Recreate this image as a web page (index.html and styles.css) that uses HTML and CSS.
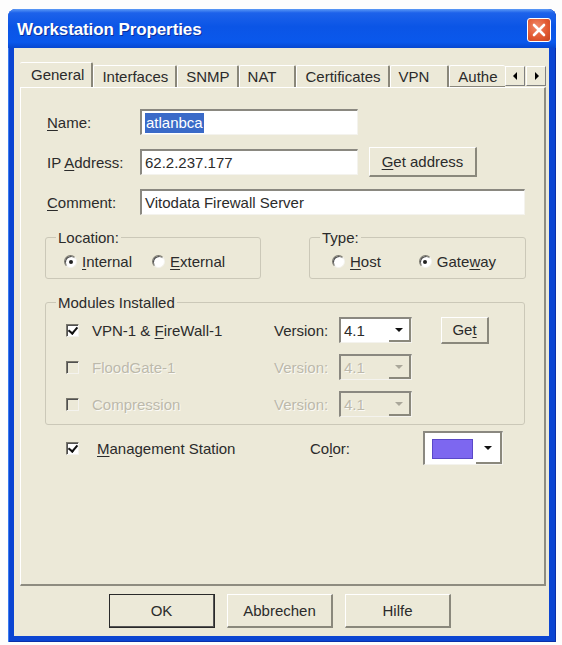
FILE: index.html
```html
<!DOCTYPE html>
<html lang="en">
<head>
<meta charset="utf-8">
<title>Workstation Properties</title>
<link rel="stylesheet" href="styles.css">
</head>
<body>
<div class="window">
  <div class="titlebar">
    <span class="title">Workstation Properties</span>
    <span class="close-btn" aria-label="Close">
      <svg width="14" height="14" viewBox="0 0 14 14"><path d="M2 2 L12 12 M12 2 L2 12" stroke="#fff" stroke-width="2.6" stroke-linecap="round"/></svg>
    </span>
  </div>

  <div class="client">
    <div class="tabstrip">
      <div class="tabs">
        <span class="tab active">General</span>
        <span class="tab">Interfaces</span>
        <span class="tab">SNMP</span>
        <span class="tab wide">NAT</span>
        <span class="tab">Certificates</span>
        <span class="tab wide">VPN</span>
        <span class="tab tab-clipped">Authe</span>
      </div>
      <div class="tab-scroll">
        <span class="scroll-btn"><svg width="5" height="8" viewBox="0 0 5 8"><path d="M4 0 L0 4 L4 8 Z" fill="#000"/></svg></span>
        <span class="scroll-btn"><svg width="5" height="8" viewBox="0 0 5 8"><path d="M1 0 L5 4 L1 8 Z" fill="#000"/></svg></span>
      </div>
    </div>

    <div class="panel">
      <div class="fields">
        <div class="field-row">
          <label class="field-label"><u>N</u>ame:</label>
          <div class="textbox"><span class="selected">atlanbca</span></div>
        </div>
        <div class="field-row">
          <label class="field-label">IP <u>A</u>ddress:</label>
          <div class="textbox">62.2.237.177</div>
          <span class="button btn-getaddr"><u>G</u>et address</span>
        </div>
        <div class="field-row">
          <label class="field-label"><u>C</u>omment:</label>
          <div class="textbox textbox-wide">Vitodata Firewall Server</div>
        </div>
      </div>

      <div class="group-row">
        <fieldset class="group group-location">
          <legend>Location:</legend>
          <div class="radio-row">
            <span class="radio checked"><span class="radio-dot"></span><span><u>I</u>nternal</span></span>
            <span class="radio"><span class="radio-dot"></span><span><u>E</u>xternal</span></span>
          </div>
        </fieldset>
        <fieldset class="group group-type">
          <legend>Type:</legend>
          <div class="radio-row">
            <span class="radio"><span class="radio-dot"></span><span><u>H</u>ost</span></span>
            <span class="radio checked gap-wide"><span class="radio-dot"></span><span>Gate<u>w</u>ay</span></span>
          </div>
        </fieldset>
      </div>

      <fieldset class="group group-modules">
        <legend>Modules Installed</legend>
        <div class="module-row">
          <span class="checkbox checked"></span>
          <span class="module-name">VPN-1 &amp; <u>F</u>ireWall-1</span>
          <span class="version-label">Version:</span>
          <span class="combo"><span class="combo-value">4.1</span><span class="combo-btn"></span></span>
          <span class="button btn-get">Ge<u>t</u></span>
        </div>
        <div class="module-row disabled">
          <span class="checkbox"></span>
          <span class="module-name">FloodGate-1</span>
          <span class="version-label">Version:</span>
          <span class="combo"><span class="combo-value">4.1</span><span class="combo-btn"></span></span>
        </div>
        <div class="module-row disabled">
          <span class="checkbox"></span>
          <span class="module-name">Compression</span>
          <span class="version-label">Version:</span>
          <span class="combo"><span class="combo-value">4.1</span><span class="combo-btn"></span></span>
        </div>
      </fieldset>

      <div class="mgmt-row">
        <span class="checkbox checked"></span>
        <span class="mgmt-name"><u>M</u>anagement Station</span>
        <span class="color-label">Co<u>l</u>or:</span>
        <span class="combo combo-color"><span class="combo-value"><span class="swatch"></span></span><span class="combo-btn"></span></span>
      </div>
    </div>

    <div class="dialog-buttons">
      <span class="button dlg-btn default">OK</span>
      <span class="button dlg-btn">Abbrechen</span>
      <span class="button dlg-btn">Hilfe</span>
    </div>
  </div>
</div>
</body>
</html>
```

FILE: styles.css
```css
* { box-sizing: border-box; }

body {
  margin: 0;
  background: #fdfdfd;
  font-family: "Liberation Sans", Arial, sans-serif;
  font-size: 15px;
  color: #2b2b2b;
}

u { text-decoration-thickness: 1px; text-underline-offset: 2px; }

/* window frame */
.window {
  margin: 9px 0 0 8px;
  width: 548px;
  height: 633px;
  background: #0b45d2;
  border-radius: 8px 8px 0 0;
  display: flex;
  flex-direction: column;
  box-shadow: inset 1px 0 0 #3a7bf0, inset -1px 0 0 #0a2fa8, inset 0 -1px 0 #0a2fa8;
}

.titlebar {
  height: 39px;
  flex: none;
  display: flex;
  align-items: center;
  justify-content: space-between;
  padding: 0 5px 0 9px;
  border-radius: 8px 8px 0 0;
  background: linear-gradient(#5c9af6 0%, #1d62ea 10%, #0b55e6 45%, #0a58ec 85%, #0747d0 100%);
}

.title {
  color: #fff;
  font-weight: bold;
  font-size: 17px;
  letter-spacing: -0.1px;
  text-shadow: 1px 1px 0 #0a2f9c;
  margin-top: 2px;
}

.close-btn {
  width: 24px;
  height: 24px;
  margin-top: 2px;
  border-radius: 3px;
  border: 1px solid #fff;
  background: radial-gradient(circle at 40% 35%, #f08a6a 0%, #e25a32 55%, #c5431f 100%);
  display: flex;
  align-items: center;
  justify-content: center;
}

.client {
  flex: 1;
  margin: 0 7px 6px 6px;
  background: #ece9d8;
  padding: 14px 3px 0 6px;
  display: flex;
  flex-direction: column;
}

/* tabs */
.tabstrip {
  height: 25px;
  display: flex;
  align-items: flex-end;
}

.tabs {
  flex: 1;
  display: flex;
  align-items: flex-end;
  overflow: hidden;
  white-space: nowrap;
  height: 25px;
}

.tab {
  flex: none;
  height: 22px;
  line-height: 21px;
  padding: 0 7px 0 8px;
  border-top: 1px solid #fff;
  border-left: 1px solid #fff;
  border-right: 2px solid #8a877a;
  border-radius: 2px 2px 0 0;
}

.tab.active {
  height: 25px;
  line-height: 24px;
  padding: 0 7px 0 11px;
  border-left: none;
  position: relative;
  z-index: 1;
  background: #ece9d8;
}

.tab.wide { padding-right: 18px; }

.tab.tab-clipped {
  flex: 1;
  border-right: none;
  padding-right: 0;
  border-bottom: 1px solid #8a877a;
}

.tab-scroll {
  flex: none;
  display: flex;
  gap: 1px;
  margin-bottom: 1px;
}

.scroll-btn {
  width: 20px;
  height: 20px;
  display: flex;
  align-items: center;
  justify-content: center;
  background: #ece9d8;
  border-top: 1px solid #fff;
  border-left: 1px solid #fff;
  border-right: 1px solid #808080;
  border-bottom: 1px solid #808080;
}

/* tab page */
.panel {
  height: 499px;
  border-top: 1px solid #fff;
  border-left: 1px solid #fff;
  border-right: 2px solid #8e8c80;
  border-bottom: 2px solid #8e8c80;
  padding-top: 21px;
}

.fields {
  display: flex;
  flex-direction: column;
  gap: 12px;
  padding-left: 26px;
}

.field-row {
  display: flex;
  align-items: center;
  min-height: 26px;
}

.field-label {
  width: 93px;
  flex: none;
}

.textbox {
  width: 218px;
  height: 26px;
  background: #fff;
  border-top: 2px solid #8a8880;
  border-left: 2px solid #8a8880;
  border-right: 1px solid #f4f3ee;
  border-bottom: 1px solid #f4f3ee;
  padding: 2px 3px 0;
  line-height: 20px;
  white-space: nowrap;
  overflow: hidden;
}

.textbox-wide { width: 385px; }

.selected {
  background: #3a6ac8;
  color: #fff;
  padding: 1px 1px 2px;
}

.button {
  display: inline-flex;
  align-items: center;
  justify-content: center;
  background: #ece9d8;
  border-top: 1px solid #fff;
  border-left: 1px solid #fff;
  border-right: 2px solid #8a887c;
  border-bottom: 2px solid #8a887c;
}

.btn-getaddr {
  margin-left: 11px;
  width: 108px;
  height: 30px;
}

/* group boxes */
.group {
  margin: 0;
  border: 1px solid #cbc8b8;
  border-radius: 3px;
  padding: 8px 10px 8px;
  min-width: 0;
}

.group legend {
  padding: 0 2px;
  line-height: 15px;
}

.group-row {
  display: flex;
  gap: 48px;
  margin: 15px 0 0 24px;
}

.group-location { width: 216px; }
.group-type { width: 217px; }

.radio-row {
  display: flex;
  align-items: center;
  height: 17px;
  margin-left: 8px;
  gap: 20px;
}

.group-type .radio-row { margin-left: 12px; }
.radio.gap-wide { margin-left: 18px; }

.radio {
  display: inline-flex;
  align-items: center;
  gap: 5px;
}

.radio-dot {
  width: 13px;
  height: 13px;
  border-radius: 50%;
  background: #fff;
  border: 1px solid;
  border-color: #7a786e #f4f3ee #f4f3ee #7a786e;
  box-shadow: inset 1px 1px 0 #505050;
  display: inline-flex;
  align-items: center;
  justify-content: center;
}

.radio.checked .radio-dot::after {
  content: "";
  width: 4px;
  height: 4px;
  border-radius: 50%;
  background: #222;
}

.group-modules {
  width: 480px;
  margin: 16px 0 0 24px;
  padding: 7px 10px 7px;
}

.module-row {
  display: flex;
  align-items: center;
  height: 26px;
  margin: 0 0 11px 10px;
}

.module-row:last-child { margin-bottom: 0; }

.checkbox {
  flex: none;
  width: 13px;
  height: 13px;
  background: #fff;
  border: 1px solid;
  border-color: #7a786e #f4f3ee #f4f3ee #7a786e;
  box-shadow: inset 1px 1px 0 #505050;
  position: relative;
}

.checkbox.checked::after {
  content: "";
  position: absolute;
  left: 3px;
  top: 0px;
  width: 4px;
  height: 7px;
  border-right: 2px solid #111;
  border-bottom: 2px solid #111;
  transform: rotate(40deg);
}

.module-name {
  width: 182px;
  margin-left: 13px;
}

.version-label {
  width: 65px;
}

.combo {
  display: flex;
  width: 73px;
  height: 26px;
  background: #fff;
  border-top: 2px solid #8a8880;
  border-left: 2px solid #8a8880;
  border-right: 1px solid #f4f3ee;
  border-bottom: 1px solid #f4f3ee;
}

.combo-value {
  flex: 1;
  padding: 2px 0 0 3px;
  line-height: 20px;
}

.combo-btn {
  width: 22px;
  border-right: 2px solid #8a887c;
  border-bottom: 2px solid #8a887c;
  display: flex;
  align-items: center;
  justify-content: center;
}

.combo-btn::after {
  content: "";
  border-left: 4px solid transparent;
  border-right: 4px solid transparent;
  border-top: 4px solid #111;
}

.btn-get {
  margin-left: 29px;
  width: 48px;
  height: 27px;
}

.module-row.disabled { color: #bcb9ab; text-shadow: 1px 1px 0 #fbfaf6; }
.module-row.disabled .combo { background: #ece9d8; }
.module-row.disabled .checkbox { background: #ece9d8; }
.module-row.disabled .combo-btn::after { border-top-color: #aaa79a; }

/* management station */
.mgmt-row {
  display: flex;
  align-items: center;
  margin: 6px 0 0 45px;
}

.mgmt-name {
  width: 213px;
  margin-left: 18px;
}

.color-label { width: 113px; }

.combo-color {
  width: 80px;
  height: 34px;
}

.combo-color .combo-value {
  padding: 6px 0 0 7px;
}

.swatch {
  display: block;
  width: 41px;
  height: 20px;
  background: #7d67f0;
  border: 1px solid #5a48c8;
}

.combo-color .combo-btn { width: 26px; }

/* dialog buttons */
.dialog-buttons {
  display: flex;
  justify-content: center;
  gap: 12px;
  margin-top: 8px;
  padding-right: 6px;
}

.dlg-btn {
  width: 106px;
  height: 34px;
}

.dlg-btn.default {
  outline: 1px solid #2a2a2a;
  outline-offset: -1px;
  border-right-color: #555;
  border-bottom-color: #555;
}
```
